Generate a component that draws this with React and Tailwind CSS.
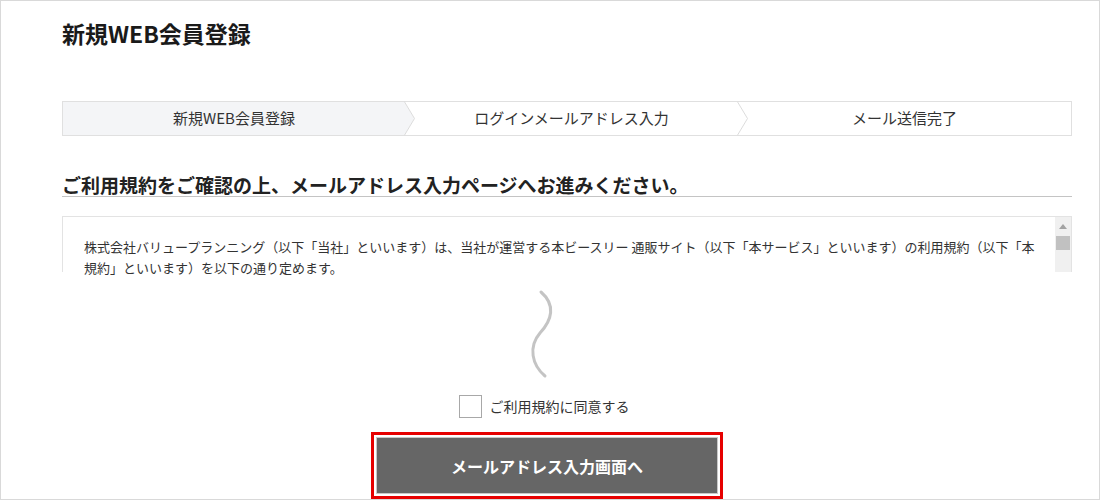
import React from "react";

const font = { fontFamily: '"Noto Sans CJK JP", "Noto Sans", sans-serif' };

function Chevron({ fill }) {
  return (
    <svg
      className="absolute top-[-1px] right-[-10px] z-10"
      width="11"
      height="35"
      viewBox="0 0 11 35"
    >
      <polygon points="0,0 10.5,17.5 0,35" fill={fill} />
      <polyline points="0,0 10.5,17.5 0,35" fill="none" stroke="#dcdcdc" strokeWidth="1" />
    </svg>
  );
}

export default function App() {
  return (
    <div
      className="w-[1100px] h-[500px] border border-[#d9d9d9] bg-white overflow-hidden text-[#222]"
      style={font}
    >
      <div className="pl-[61px] pr-[27px]">
        <h1 className="mt-[16px] text-[23px] leading-[32px] font-bold text-[#1a1a1a]">
          新規WEB会員登録
        </h1>

        <div className="mt-[52px] flex h-[35px] border border-[#e0e0e0] text-[15px] text-[#333]">
          <div className="relative w-[342px] bg-[#f4f5f7] flex items-center justify-center">
            新規WEB会員登録
            <Chevron fill="#f4f5f7" />
          </div>
          <div className="relative w-[333px] bg-white flex items-center justify-center">
            ログインメールアドレス入力
            <Chevron fill="#ffffff" />
          </div>
          <div className="flex-1 bg-white flex items-center justify-center">
            メール送信完了
          </div>
        </div>

        <h2 className="mt-[38px] text-[19px] leading-[22px] font-bold text-[#222] border-b border-[#c4c4c4]">
          ご利用規約をご確認の上、メールアドレス入力ページへお進みください。
        </h2>

        <div className="relative mt-[19px] h-[56px] border-t border-l border-r border-[#e3e3e3]">
          <div className="pl-[21px] pt-[19px] text-[13px] leading-[21px] text-[#333]">
            <div className="whitespace-nowrap">
              株式会社バリュープランニング（以下「当社」といいます）は、当社が運営する本ビースリー 通販サイト（以下「本サービス」といいます）の利用規約（以下「本
            </div>
            <div className="whitespace-nowrap">規約」といいます）を以下の通り定めます。</div>
          </div>
          <div className="absolute top-0 right-0 w-[16px] h-full bg-[#f0f0f0] flex flex-col items-center">
            <svg className="mt-[7px]" width="8" height="5" viewBox="0 0 8 5">
              <polygon points="4,0 8,5 0,5" fill="#a3a3a3" />
            </svg>
            <div className="mt-[7px] w-[14px] h-[14px] bg-[#c1c1c1]" />
          </div>
        </div>
      </div>

      <div className="flex flex-col items-center pr-[6px]">
        <svg className="mt-[16px] -ml-[10px]" width="40" height="100" viewBox="0 0 40 100">
          <path
            d="M19 4 C34 17, 30 32, 18 45 C6 59, 10 77, 23 88"
            fill="none"
            stroke="#c4c4c4"
            strokeWidth="3"
            strokeLinecap="round"
          />
        </svg>

        <label className="mt-[7px] -ml-[6px] flex items-center gap-[8px] text-[14px] text-[#333]">
          <span className="w-[23px] h-[23px] border border-[#a8a8a8] bg-white" />
          <span className="leading-[23px]">ご利用規約に同意する</span>
        </label>

        <div className="mt-[14px] w-[352px] border-[3px] border-[#e60000] p-[2px] bg-white">
          <button className="w-full h-[57px] bg-[#666666] border border-[#c8c8c8] text-white text-[16px] font-bold flex items-center justify-center">
            メールアドレス入力画面へ
          </button>
        </div>
      </div>
    </div>
  );
}
